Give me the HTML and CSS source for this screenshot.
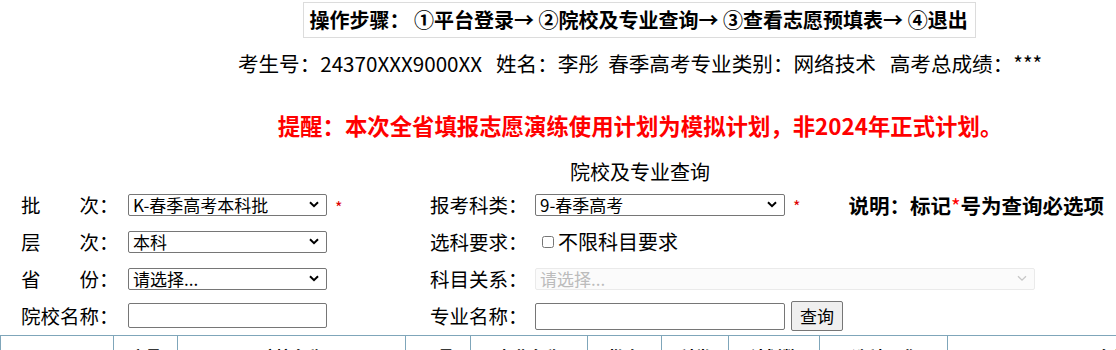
FILE: index.html
```html
<!DOCTYPE html>
<html>
<head>
    <title>院校及专业查询</title>
    <link rel="stylesheet" href="styles.css">
</head>
<body>
    <div class="page">
        <div class="steps">操作步骤：&nbsp;①平台登录→ ②院校及专业查询→ ③查看志愿预填表→ ④退出</div>
        <div class="info">考生号：24370XXX9000XX&nbsp;&nbsp;&nbsp;姓名：李彤&nbsp;&nbsp;春季高考专业类别：网络技术&nbsp;&nbsp;&nbsp;高考总成绩：***</div>
        <div class="notice">提醒：本次全省填报志愿演练使用计划为模拟计划，非2024年正式计划。</div>
        <div class="query-title">院校及专业查询</div>

        <div class="query">
            <div class="label">批　　次：</div>
            <div class="cell">
                <select class="sel-short"><option>K-春季高考本科批</option></select>
                <span class="star">*</span>
            </div>
            <div class="label">报考科类：</div>
            <div class="cell">
                <select class="sel-mid"><option>9-春季高考</option></select>
                <span class="star">*</span>
                <span class="note">说明：标记<span class="red">*</span>号为查询必选项</span>
            </div>

            <div class="label">层　　次：</div>
            <div class="cell">
                <select class="sel-short"><option>本科</option></select>
            </div>
            <div class="label">选科要求：</div>
            <div class="cell">
                <label class="check"><input type="checkbox">不限科目要求</label>
            </div>

            <div class="label">省　　份：</div>
            <div class="cell">
                <select class="sel-short"><option>请选择...</option></select>
            </div>
            <div class="label">科目关系：</div>
            <div class="cell">
                <select class="sel-long" disabled><option>请选择...</option></select>
            </div>

            <div class="label">院校名称：</div>
            <div class="cell">
                <input type="text" class="txt-short">
            </div>
            <div class="label">专业名称：</div>
            <div class="cell">
                <input type="text" class="txt-mid">
                <button class="btn">查询</button>
            </div>
        </div>

        <table class="result">
            <tr>
                <th class="c1">&nbsp;</th>
                <th class="c2">序号</th>
                <th class="c3">院校名称</th>
                <th class="c4">代号</th>
                <th class="c5">专业名称</th>
                <th class="c6">批次</th>
                <th class="c7">科类</th>
                <th class="c8">计划数</th>
                <th class="c9">选科要求</th>
                <th>备注</th>
            </tr>
        </table>
    </div>
</body>
</html>
```

FILE: styles.css
```css
html {
    background-color: #fff;
}

body {
    margin: 0;
    overflow: hidden;
    font-family: "Noto Sans CJK SC", "Noto Sans", sans-serif;
    color: #000;
}

.page {
    width: 1280px;
}

.steps {
    width: 665px;
    margin: 2px auto 0;
    padding-left: 6px;
    height: 34px;
    line-height: 34px;
    border: 1px solid #dcdcdc;
    font-size: 20px;
    font-weight: bold;
    text-align: left;
    white-space: nowrap;
    position: relative;
    left: -1px;
}

.info {
    margin-top: 8px;
    height: 34px;
    line-height: 34px;
    text-align: center;
    font-size: 20.6px;
    white-space: nowrap;
}

.notice {
    margin-top: 28px;
    height: 34px;
    line-height: 34px;
    text-align: center;
    font-size: 22.4px;
    font-weight: bold;
    color: #f00;
    white-space: nowrap;
}

.query-title {
    margin-top: 16px;
    height: 28px;
    line-height: 28px;
    text-align: center;
    font-size: 20px;
}

.query {
    display: grid;
    grid-template-columns: 107px 302px 105px 1fr;
    grid-auto-rows: 37px;
    align-items: center;
    padding-left: 21px;
    font-size: 19.5px;
}

.label {
    white-space: nowrap;
}

.cell {
    display: flex;
    align-items: center;
    white-space: nowrap;
}

select,
input,
button {
    font-family: "Noto Sans CJK SC", "Noto Sans", sans-serif;
    box-sizing: border-box;
    margin: 0;
}

select {
    -webkit-appearance: none;
    appearance: none;
    height: 22px;
    line-height: 20px;
    font-size: 17px;
    padding: 0 22px 0 4px;
    border: 1px solid #767676;
    border-radius: 2px;
    background-color: #fff;
    background-image: url("data:image/svg+xml;utf8,<svg xmlns='http://www.w3.org/2000/svg' width='10' height='7' viewBox='0 0 10 7'><path d='M1 1.2 L5 5.2 L9 1.2' fill='none' stroke='%23000' stroke-width='2'/></svg>");
    background-repeat: no-repeat;
    background-position: right 7px center;
    color: #000;
}

select:disabled {
    color: #a0a0a0;
    border-color: #e2e2e2;
    background-color: #fafafa;
    background-image: url("data:image/svg+xml;utf8,<svg xmlns='http://www.w3.org/2000/svg' width='10' height='7' viewBox='0 0 10 7'><path d='M1 1.2 L5 5.2 L9 1.2' fill='none' stroke='%23b0b0b0' stroke-width='1.3'/></svg>");
}

.sel-short {
    width: 199px;
}

.sel-mid {
    width: 250px;
}

.sel-long {
    width: 500px;
}

.star {
    color: #d00;
    font-size: 16px;
    margin-left: 8px;
    align-self: flex-start;
    margin-top: 4px;
}

.note {
    margin-left: 48px;
    font-weight: bold;
    font-size: 20.5px;
}

.red {
    color: #f00;
    font-weight: normal;
}

.check {
    display: flex;
    align-items: center;
    font-size: 20px;
}

.check input {
    width: 12px;
    height: 12px;
    margin: 0 4px 0 7px;
}

input[type=text] {
    border: 1px solid #767676;
    border-radius: 2px;
    padding: 1px 4px;
    font-size: 16px;
}

.txt-short {
    width: 199px;
    height: 25px;
}

.txt-mid {
    width: 250px;
    height: 27px;
    margin-top: 1px;
}

.btn {
    margin-left: 6px;
    width: 52px;
    height: 30px;
    font-size: 17px;
    padding: 0;
    background-color: #efefef;
    border: 1px solid #767676;
    border-radius: 2px;
}

.result {
    margin-top: 1px;
    width: 1280px;
    border-collapse: collapse;
    table-layout: fixed;
}

.result th {
    border: 1px solid #7fa6ba;
    height: 30px;
    padding: 8px 0 0;
    font-size: 16px;
    font-weight: bold;
    vertical-align: top;
}

.c1 { width: 112px; }
.c2 { width: 63px; }
.c3 { width: 227px; }
.c4 { width: 64px; }
.c5 { width: 116px; }
.c6 { width: 73px; }
.c7 { width: 66px; }
.c8 { width: 90px; }
.c9 { width: 127px; }
```
